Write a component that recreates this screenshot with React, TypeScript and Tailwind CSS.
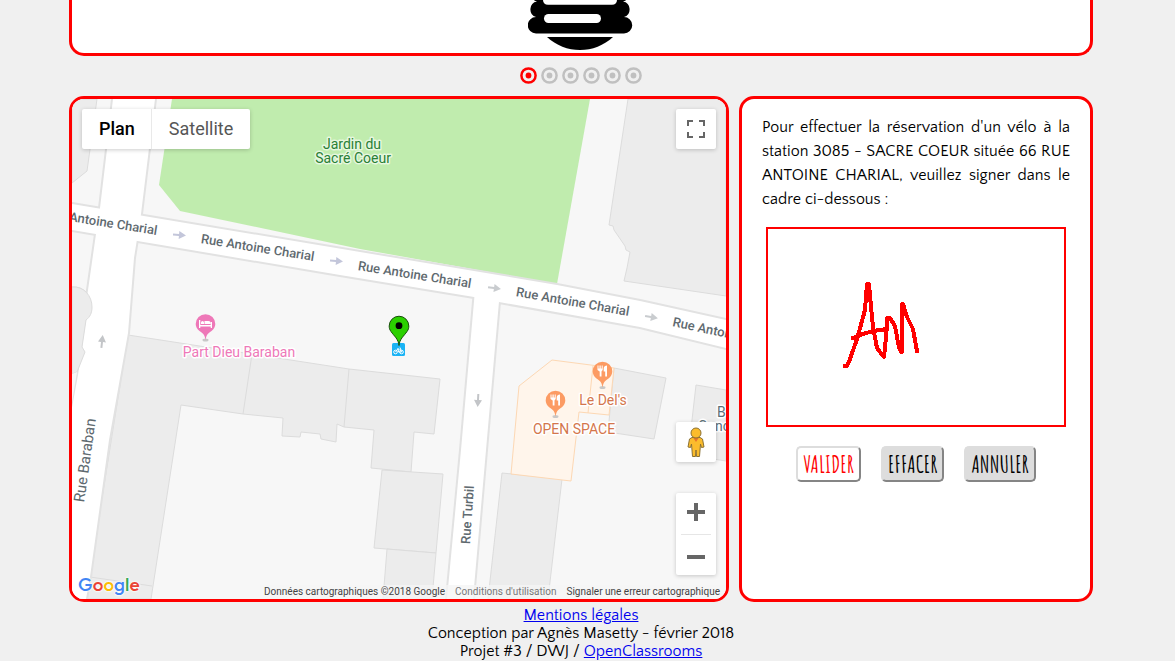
import React from "react";

type Point = { x: number; y: number };

const streetLabels: { x: number; y: number; angle: number; text: string }[] = [
  { x: 100, y: 226, angle: 9, text: "Rue Antoine Charial" },
  { x: 257, y: 252, angle: 9, text: "Rue Antoine Charial" },
  { x: 414, y: 279, angle: 9, text: "Rue Antoine Charial" },
  { x: 572, y: 306, angle: 10, text: "Rue Antoine Charial" },
  { x: 728, y: 338, angle: 12, text: "Rue Antoine Charial" },
  { x: 90, y: 461, angle: -82, text: "Rue Baraban" },
  { x: 472, y: 515, angle: -86, text: "Rue Turbil" },
];

const arrows: (Point & { angle: number; color: string })[] = [
  { x: 179, y: 235, angle: 5, color: "#c3c6da" },
  { x: 336, y: 261, angle: 5, color: "#c3c6da" },
  { x: 494, y: 288, angle: 8, color: "#c9cccf" },
  { x: 651, y: 317, angle: 10, color: "#c9cccf" },
  { x: 102, y: 342, angle: -84, color: "#c3c5c8" },
  { x: 478, y: 400, angle: 93, color: "#c3c5c8" },
];

const buildings = [
  "M72 99H97L87 171L72 183Z",
  "M628 99L609 225L613 226L614 230L625 246L626 250L630 252L627 268L624 281L726 296V99Z",
  "M72 287C84 286 92 296 92 307C92 313 90 317 86 320L82 347L85 352L77 372L72 374Z",
  "M128 335L349 369L440 379L434 434L414 432L411 472L371 468L374 430L344 427L337 424L336 442L321 439L320 434L301 432L300 437L282 436L283 418L243 414L181 405L151 599H86Z",
  "M382 470L443 474L436 553L374 548Z",
  "M387 549L436 553L432 599H383Z",
  "M502 473L562 479L548 599H488Z",
  "M614 368L666 378L654 439L608 432Z",
  "M696 385L726 390V461L688 455Z",
];

const roads = [
  "M72 204L480 272L557 285L640 301L726 320V348L640 327L499 302L474 297L340 275L72 230Z",
  "M113 99L100 208L96 234L92 262L87 297L86 320L78 375L66 440L60 599H86L90 577L109 440L128 333L134 258L141 214L155 99Z",
  "M475 290L461 450L447 599H473L486 450L500 290Z",
];

function PlacePin({ x, y, color, children }: Point & { color: string; children: React.ReactNode }) {
  return (
    <g transform={`translate(${x} ${y})`}>
      <ellipse cx="0" cy="16" rx="3" ry="1.500" fill="#c8c8c8" />
      <path
        d="M0 16C-1 10-3 9-6 7C-8.500 5-9.800 2.500-9.800 0A9.800 9.800 0 0 1 9.800 0C9.800 2.500 8.500 5 6 7C3 9 1 10 0 16Z"
        fill={color}
      />
      {children}
    </g>
  );
}

function Cutlery() {
  return (
    <g fill="#fff">
      <path d="M-5-6h1v3h1v-3h1.200v3h1v-3h1v4.500l-1.200 1.500v5h-1.800v-5l-2.200-1.500Z" />
      <path d="M4.500-6v11h-1.800v-5h-1.500v-3c0-2 1.500-3 3.300-3Z" />
    </g>
  );
}

function MapDrawing() {
  return (
    <svg
      viewBox="72 99 654 500"
      preserveAspectRatio="xMidYMid slice"
      className="block h-full w-full"
      role="img"
      aria-label="Carte du quartier de la station"
      fontFamily="Roboto, sans-serif"
    >
      <rect x="72" y="99" width="654" height="500" fill="#f7f7f7" />
      <path d="M172 99L159 185L180 211L360 249L557 284L590 99Z" fill="#c0ecae" />
      <g fill="#ececec" stroke="#dcdcdc">
        {buildings.map((d) => (
          <path key={d} d={d} />
        ))}
        <path d="M252 354L243 414M349 369L344 427M90 577L152 586" fill="none" />
      </g>
      <g fill="#fff5eb" stroke="#fdd8b4">
        <path d="M552 360L614 368L609 415L579 412L571 481L511 474L519 386Z" />
        <path d="M593 366L588 413" />
      </g>
      <g fill="#fff" stroke="#e2e2e2" strokeWidth="4">
        {roads.map((d) => (
          <path key={d} d={d} />
        ))}
      </g>
      <g fill="#fff">
        {roads.map((d) => (
          <path key={d} d={d} />
        ))}
      </g>
      <path
        d="M72 287C84 286 92 296 92 307C92 313 90 317 86 320L82 347L85 352L77 372L72 374Z"
        fill="#ececec"
        stroke="#dcdcdc"
      />
      <path d="M72 374L77 372L72 402Z" fill="#f7f7f7" />

      {arrows.map((a) => (
        <g key={`${a.x}-${a.y}`} transform={`translate(${a.x} ${a.y}) rotate(${a.angle})`}>
          <path d="M-6-1H0V-4L7 0L0 4V1H-6Z" fill={a.color} />
        </g>
      ))}

      <g fontSize="13" fontWeight="500" fill="#5f6a70" stroke="#fff" strokeWidth="3" paintOrder="stroke" textAnchor="middle">
        {streetLabels.map((l) => (
          <text
            key={`${l.x}-${l.y}`}
            x={l.x}
            y={l.y}
            transform={`rotate(${l.angle} ${l.x} ${l.y})`}
            fontSize={l.text === "Rue Baraban" ? 15 : 13}
            fontWeight={l.text === "Rue Baraban" ? 400 : 500}
          >
            {l.text}
          </text>
        ))}
      </g>

      <g fontSize="14" strokeWidth="3" paintOrder="stroke" strokeLinejoin="round" textAnchor="middle">
        <g fill="#2a8036" stroke="#e6f7df">
          <text x="352" y="149">Jardin du</text>
          <text x="353" y="163">Sacré Coeur</text>
        </g>
        <g stroke="#fff">
          <text x="239" y="357" fill="#ee78b8">Part Dieu Baraban</text>
          <text x="603" y="405" fill="#d4764c">Le Del's</text>
          <text x="574" y="434" fill="#d4764c">OPEN SPACE</text>
        </g>
        <g stroke="#fff" fill="#5b7078" textAnchor="start">
          <text x="717" y="417">B</text>
          <text x="698" y="431">Conc</text>
        </g>
      </g>

      <PlacePin x={205.500} y={324} color="#ee78b8">
        <path
          d="M-6.500-4h1.300v5h10.400v-3h1.300v6h-1.300v-1.500h-10.400v1.500h-1.300ZM-4.500-1.500a1.500 1.500 0 0 1 3 0v1.500h-3ZM-1-3h4c1.500 0 2 .8 2 2v1h-6Z"
          fill="#fff"
        />
      </PlacePin>
      <PlacePin x={602.500} y={371.500} color="#fc9b63">
        <Cutlery />
      </PlacePin>
      <PlacePin x={555.500} y={400.500} color="#fc9b63">
        <Cutlery />
      </PlacePin>

      <rect x="392" y="343" width="13" height="13" rx="1.500" fill="#1ab3f5" />
      <g fill="none" stroke="#fff">
        <circle cx="395.500" cy="352" r="1.800" />
        <circle cx="401.500" cy="352" r="1.800" />
        <path d="M395.500 352L398 348.500L400 350.500M398 348.500L398.500 352L401.500 352L400 347.500" />
      </g>
      <path
        d="M399 345.500C398.500 339 394 336 391 331.500C389.500 329.500 389.200 328 389.200 326A9.800 9.800 0 0 1 408.800 326C408.800 328 408.500 329.500 407 331.500C404 336 399.500 339 399 345.500Z"
        fill="#2bd000"
        stroke="#174d0a"
      />
      <circle cx="399" cy="325.700" r="3.400" fill="#000" />
    </svg>
  );
}

function HeroLogo() {
  return (
    <svg width="106" height="50" viewBox="528 0 106 50" className="block" aria-hidden="true">
      <path
        d="M534 0H626C625 1 624 1.300 623 1.500A8 8 0 0 1 624 17A8 8 0 0 1 624 33.500H536A8 8 0 0 1 536 17A8 8 0 0 1 537 1.500C536 1.300 535 1 534 0Z"
        fill="#000"
      />
      <path d="M543 0H617C617 3 615 4.700 612 4.700H548C545 4.700 543 3 543 0Z" fill="#fff" />
      <rect x="544" y="14" width="57" height="9" rx="4.500" fill="#fff" />
      <path d="M547 37H613C604 45.500 592 50 580 50S556 45.500 547 37Z" fill="#000" />
    </svg>
  );
}

function Carousel() {
  return (
    <nav aria-label="Diapositives" className="flex justify-center gap-1 pt-[11px] pb-3">
      {[1, 2, 3, 4, 5, 6].map((n) => (
        <button key={n} type="button" aria-label={`Diapositive ${n}`} className={n === 1 ? "text-[#ff0000]" : "text-[#c0c0c0]"}>
          <svg width="17" height="17" viewBox="0 0 17 17" className="block">
            <circle cx="8.500" cy="8.500" r="7.100" fill="#f0f0f0" stroke="currentColor" strokeWidth="2.500" />
            <circle cx="8.500" cy="8.500" r="2.900" fill="currentColor" />
          </svg>
        </button>
      ))}
    </nav>
  );
}

function Pegman() {
  return (
    <svg width="18" height="31" viewBox="0 0 18 31" className="block">
      <path
        d="M5 10.500L2.500 12L1 20L3.500 20.500L4.500 17L5.500 29.500H8.500L9 23L9.500 29.500H12.500L13.500 17L14.500 20.500L17 20L15.500 12L13 10.500Z"
        fill="#fbbc2c"
        stroke="#8a7134"
      />
      <path d="M6 10.500H12L9 15Z" fill="#e8762b" />
      <circle cx="9" cy="6" r="5" fill="#fbbc2c" stroke="#8a7134" />
    </svg>
  );
}

function StationMap() {
  return (
    <section className="relative h-[506px] overflow-hidden rounded-[15px] border-3 border-[#ff0000] bg-[#f7f7f7] font-['Roboto',sans-serif]">
      <MapDrawing />

      <div className="absolute top-[10px] left-[10px] flex rounded-xs bg-white text-lg leading-10 shadow-[0_1px_4px_rgba(0,0,0,0.2)]">
        <button type="button" className="pr-4 pl-[17px] font-medium text-black">Plan</button>
        <button type="button" className="border-l border-[#e9e9e9] px-[17px] text-[#565656]">Satellite</button>
      </div>

      <button
        type="button"
        aria-label="Plein écran"
        className="absolute top-[10px] right-[10px] flex h-10 w-10 items-center justify-center rounded-xs bg-white shadow-[0_1px_4px_rgba(0,0,0,0.2)]"
      >
        <svg width="18" height="18" viewBox="0 0 18 18">
          <path d="M0 0H6V2H2V6H0ZM12 0H18V6H16V2H12ZM0 12H2V16H6V18H0ZM16 12H18V18H12V16H16Z" fill="#666" />
        </svg>
      </button>

      <div className="absolute right-[10px] bottom-6 flex w-10 flex-col gap-[31px]">
        <button
          type="button"
          aria-label="Street View"
          className="flex h-10 items-center justify-center rounded-xs bg-white shadow-[0_1px_4px_rgba(0,0,0,0.2)]"
        >
          <Pegman />
        </button>
        <div className="flex flex-col items-center rounded-xs bg-white shadow-[0_1px_4px_rgba(0,0,0,0.2)]">
          <button type="button" aria-label="Zoom avant" className="flex h-[41px] w-full justify-center pt-[10px]">
            <svg width="18" height="18" viewBox="0 0 18 18">
              <path d="M7 0H11V7H18V11H11V18H7V11H0V7H7Z" fill="#666" />
            </svg>
          </button>
          <span className="h-px w-[30px] bg-[#e6e6e6]" />
          <button type="button" aria-label="Zoom arrière" className="flex h-10 w-full items-center justify-center">
            <svg width="18" height="18" viewBox="0 0 18 18">
              <path d="M0 9H18V13H0Z" fill="#666" />
            </svg>
          </button>
        </div>
      </div>

      <a
        href="#google"
        className="absolute bottom-[3px] left-[6px] font-['Outfit','Questrial','Lato',sans-serif] text-[19px] leading-[24px] font-medium [text-shadow:0_0_2px_#fff,0_0_2px_#fff,0_0_3px_#fff]"
      >
        <span className="text-[#4285f4]">G</span>
        <span className="text-[#ea4335]">o</span>
        <span className="text-[#fbbc05]">o</span>
        <span className="text-[#4285f4]">g</span>
        <span className="text-[#34a853]">l</span>
        <span className="text-[#ea4335]">e</span>
      </a>

      <div className="absolute right-0 bottom-0 flex text-[10px] leading-[14px] whitespace-nowrap text-[#444]">
        <span className="bg-[#f5f5f5]/80 pr-[6px] pl-1">Données cartographiques ©2018 Google</span>
        <a href="#conditions" className="bg-[#f5f5f5]/80 pr-[6px] pl-1 text-[#777]">Conditions d'utilisation</a>
        <a href="#signaler" className="bg-[#f5f5f5]/80 pr-[6px] pl-1">Signaler une erreur cartographique</a>
      </div>
    </section>
  );
}

function Signature() {
  return (
    <div className="h-[200px] w-full max-w-[300px] border-2 border-[#ff0000]">
      <svg viewBox="2 2 296 196" className="block h-full w-full" role="img" aria-label="Signature">
        <g fill="none" stroke="#ff0000" strokeWidth="4" strokeLinejoin="round" strokeLinecap="square" shapeRendering="crispEdges">
          <path d="M79 139H81L84 132L91 112L99 83L101 57H103L105 80L107 100L111 121L118 130L120 110L121 91H124L129 99L133 121L135 125H136L136 77H137L141 90L147 102L151 124" />
          <path d="M87 111L97 107L107 104L121 102" />
        </g>
      </svg>
    </div>
  );
}

function Reservation() {
  const button =
    "h-9 rounded-[5px] border-2 border-t-[#dddddd] border-l-[#dddddd] border-r-[#858585] border-b-[#858585] px-[5px] text-center font-['Amatic_SC',sans-serif] font-bold text-2xl leading-8 whitespace-nowrap";
  return (
    <section className="flex flex-col items-center rounded-[15px] border-3 border-[#ff0000] bg-white px-5 pt-4">
      <p className="text-justify text-base leading-6">
        Pour effectuer la réservation d'un vélo à la station 3085 - SACRE COEUR située 66 RUE ANTOINE CHARIAL, veuillez
        signer dans le cadre ci-dessous :
      </p>
      <div className="mt-4 flex w-full justify-center">
        <Signature />
      </div>
      <div className="mt-[19px] flex justify-center gap-5">
        <button type="button" className={`${button} bg-white text-[#ff0000]`}>VALIDER</button>
        <button type="button" className={`${button} bg-[#dddddd] text-black`}>EFFACER</button>
        <button type="button" className={`${button} bg-[#dddddd] text-black`}>ANNULER</button>
      </div>
    </section>
  );
}

export default function App() {
  return (
    <div className="min-h-screen bg-[#f0f0f0] pr-[13px] font-['Quattrocento_Sans','Lato',sans-serif] text-black">
      <div className="mx-auto max-w-5xl">
        <header className="flex justify-center rounded-b-[15px] border-x-3 border-b-3 border-[#ff0000] bg-white pb-[3px]">
          <HeroLogo />
        </header>
        <Carousel />
        <main className="grid grid-cols-[minmax(0,660fr)_minmax(0,354fr)] gap-[10px]">
          <StationMap />
          <Reservation />
        </main>
        <footer className="pt-1 text-center text-base leading-[18px]">
          <p>
            <a href="#mentions" className="text-[#0000ee] underline">Mentions légales</a>
          </p>
          <p>Conception par Agnès Masetty - février 2018</p>
          <p>
            Projet #3 / DWJ / <a href="#openclassrooms" className="text-[#0000ee] underline">OpenClassrooms</a>
          </p>
        </footer>
      </div>
    </div>
  );
}
